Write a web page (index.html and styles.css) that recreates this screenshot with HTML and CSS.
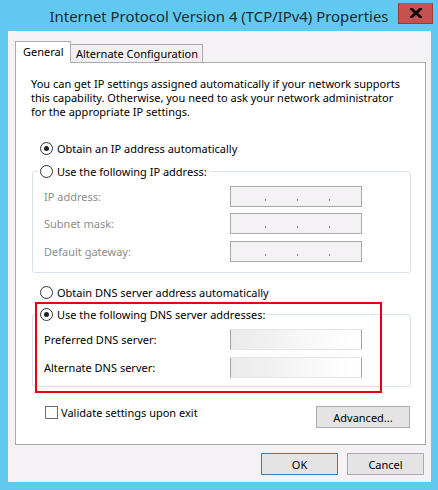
FILE: index.html
```html
<!DOCTYPE html>
<html>
<head>
<meta charset="utf-8">
<link rel="stylesheet" href="styles.css">
</head>
<body>
<div class="window">
  <div class="titlebar">
    <div class="title">Internet Protocol Version 4 (TCP/IPv4) Properties</div>
    <div class="close">
      <svg width="12" height="10" viewBox="0 0 12 10"><path d="M1.5 1 L10.5 9 M10.5 1 L1.5 9" stroke="#000" stroke-width="2.6" stroke-linecap="square"/></svg>
    </div>
  </div>
  <div class="client">
    <div class="tabs">
      <div class="tab active">General</div>
      <div class="tab">Alternate Configuration</div>
    </div>
    <div class="panel">
      <p class="intro">You can get IP settings assigned automatically if your network supports<br>this capability. Otherwise, you need to ask your network administrator<br>for the appropriate IP settings.</p>
      <div class="radio-row r1"><span class="radio checked"></span>Obtain an IP address automatically</div>
      <fieldset class="group g1">
        <legend><span class="radio"></span>Use the following IP address:</legend>
        <div class="field-row disabled first"><span class="label">IP address:</span><span class="ipbox"><i></i><i></i><i></i></span></div>
        <div class="field-row disabled second"><span class="label">Subnet mask:</span><span class="ipbox"><i></i><i></i><i></i></span></div>
        <div class="field-row disabled third"><span class="label">Default gateway:</span><span class="ipbox"><i></i><i></i><i></i></span></div>
      </fieldset>
      <div class="radio-row r3"><span class="radio"></span>Obtain DNS server address automatically</div>
      <fieldset class="group g2">
        <legend><span class="radio checked"></span>Use the following DNS server addresses:</legend>
        <div class="field-row first"><span class="label">Preferred DNS server:</span><span class="dnsbox"></span></div>
        <div class="field-row second2"><span class="label">Alternate DNS server:</span><span class="dnsbox"></span></div>
      </fieldset>
      <div class="bottom-row">
        <div class="check"><span class="checkbox"></span>Validate settings upon exit</div>
        <div class="btn adv">Advanced...</div>
      </div>
    </div>
    <div class="actions">
      <div class="btn ok">OK</div>
      <div class="btn">Cancel</div>
    </div>
  </div>
  <div class="highlight"></div>
</div>
</body>
</html>
```

FILE: styles.css
```css
* { box-sizing: border-box; }
html, body { margin: 0; padding: 0; }
body {
  width: 438px;
  height: 490px;
  overflow: hidden;
  font-family: "Noto Sans", "Open Sans", sans-serif;
  font-size: 11px;
  color: #000;
}
.window {
  position: relative;
  width: 438px;
  height: 490px;
  background: #61c9f0;
  display: flex;
  flex-direction: column;
}
.titlebar {
  height: 31px;
  display: grid;
  grid-template-columns: 1fr auto 1fr;
  align-items: start;
}
.title {
  grid-column: 2;
  font-size: 14.9px;
  line-height: 20px;
  padding-top: 6px;
  color: #1b2a33;
  white-space: nowrap;
}
.close {
  grid-column: 3;
  justify-self: end;
  margin: 3px 5px 0 0;
  width: 35px;
  height: 21px;
  background: #c75050;
  border: 1px solid #9a3a38;
  border-top: none;
  display: flex;
  align-items: center;
  justify-content: center;
}
.client {
  flex: 1;
  margin: 0 7px 8px 8px;
  background: #f5f2f5;
  padding: 10px 7px 0 7px;
  display: flex;
  flex-direction: column;
}
.tabs {
  display: flex;
  align-items: flex-end;
  height: 22px;
}
.tab {
  height: 19px;
  padding: 0 5px;
  line-height: 18px;
  background: #f1eff1;
  border: 1px solid #acacac;
  border-bottom: none;
  white-space: nowrap;
  margin-left: -1px;
  width: 133px;
}
.tab.active {
  position: relative;
  z-index: 1;
  margin-left: 0;
  width: 56px;
  height: 22px;
  background: #fff;
  padding-left: 7px;
  line-height: 20px;
}
.panel {
  width: 411px;
  margin-top: -1px;
  background: #fff;
  border: 1px solid #acacac;
  padding: 14px 0 16px 15px;
  display: flex;
  flex-direction: column;
}
.intro {
  margin: 0;
  line-height: 14px;
  white-space: nowrap;
}
.radio-row {
  display: flex;
  align-items: center;
  height: 16px;
  margin-left: 9px;
  white-space: nowrap;
}
.r1 { margin-top: 21px; }
.r3 { margin-top: 11px; }
.radio {
  width: 13px;
  height: 13px;
  border: 1px solid #333;
  border-radius: 50%;
  background: #fff;
  margin-right: 4px;
  display: inline-flex;
  align-items: center;
  justify-content: center;
  flex: none;
}
.radio.checked::after {
  content: "";
  width: 5px;
  height: 5px;
  border-radius: 50%;
  background: #222;
}
.group {
  margin: 0 0 0 1px;
  width: 379px;
  border: 1px solid #d9e2e8;
  border-radius: 3px;
  padding: 0 0 10px 5px;
  min-width: 0;
}
.g1 { margin-top: 7px; }
.g2 { margin-top: 6px; padding-bottom: 8px; }
.group legend {
  padding: 0 3px 0 2px;
  height: 16px;
  display: flex;
  align-items: center;
  white-space: nowrap;
}
.field-row {
  display: grid;
  grid-template-columns: 186px 132px;
  align-items: center;
  margin-left: 6px;
  height: 21px;
  margin-top: 7px;
}
.field-row.second { margin-top: 6px; }
.field-row.disabled .label { color: #8d8d8d; }
.ipbox {
  height: 21px;
  border: 1px solid #a9a9a9;
  background: #f5f2f5;
  display: flex;
  align-items: flex-start;
  padding: 12px 0 0 34px;
  gap: 31px;
}
.ipbox i {
  width: 1px;
  height: 2px;
  background: #8a8a8a;
}
.dnsbox {
  height: 21px;
  border-left: 1px solid #a3a3a3;
  border-right: 1px solid #a3a3a3;
  border-top: 1px solid #e6e6e6;
  border-bottom: 1px solid #e6e6e6;
  background: linear-gradient(to right, #ebebeb 0%, #efefef 25%, #f5f5f5 45%, #f9f9f9 65%, #fdfdfd 85%, #fff 100%);
}
.bottom-row {
  margin: 19px 15px 0 14px;
  display: flex;
  justify-content: space-between;
  align-items: flex-start;
}
.check {
  display: flex;
  align-items: center;
  height: 13px;
  white-space: nowrap;
}
.checkbox {
  width: 13px;
  height: 13px;
  border: 1px solid #707070;
  background: #fff;
  margin-right: 3px;
  flex: none;
}
.btn {
  width: 77px;
  height: 22px;
  border: 1px solid #acacac;
  background: #e4e4e4;
  display: flex;
  align-items: center;
  justify-content: center;
  white-space: nowrap;
}
.btn.adv { width: 94px; }
.btn.ok { border-color: #3c7fb1; }
.actions {
  display: flex;
  justify-content: flex-end;
  gap: 9px;
  margin-top: 8px;
}
.highlight {
  position: absolute;
  left: 35px;
  top: 302px;
  width: 347px;
  height: 91px;
  border: 2px solid #e8000b;
}
```
